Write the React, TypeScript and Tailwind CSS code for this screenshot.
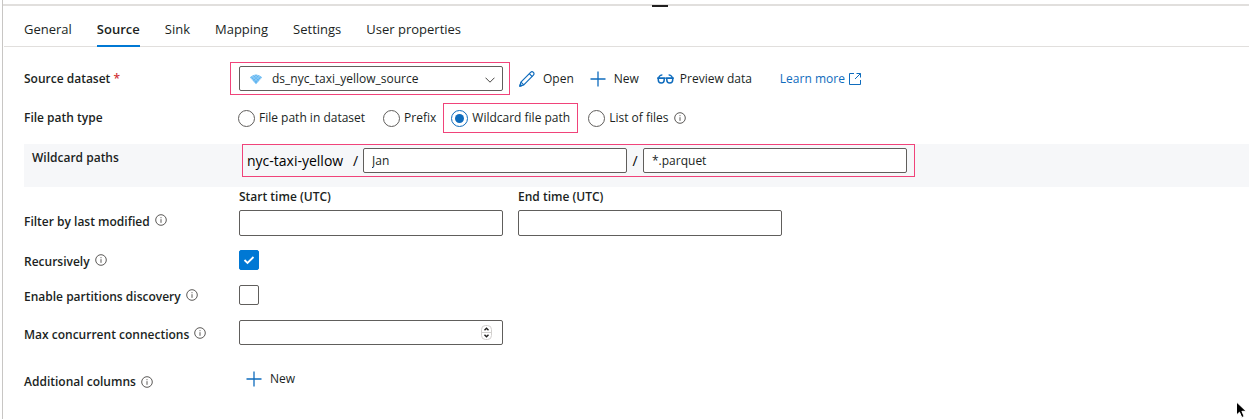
import type { ReactNode } from "react";

const tabs = ["General", "Source", "Sink", "Mapping", "Settings", "User properties"];

const fieldClass =
  "w-[264px] rounded-[2px] border border-[#605e5c] bg-white px-2 text-xs text-[#201f1e] outline-none";

function InfoIcon({ className = "" }: { className?: string }) {
  return (
    <svg viewBox="0 0 12 12" className={`size-3 shrink-0 ${className}`} fill="none" stroke="#484644" aria-hidden="true">
      <circle cx="6" cy="6" r="5.3" strokeWidth="0.9" />
      <path d="M6 5.2v3.6M6 3.2v1" strokeWidth="0.9" />
    </svg>
  );
}

function PencilIcon() {
  return (
    <svg viewBox="0 0 16 16" className="size-4" fill="none" stroke="#0f6cbd" strokeWidth="1.2" strokeLinejoin="round" aria-hidden="true">
      <path d="M.8 15.200l1.100-4.100L11.600 1.400c.8-.8 2-.8 2.800 0s.8 2 0 2.800L4.800 13.900z" />
      <path d="M10.300 2.700l2.900 2.900M1.900 11.100l2.900 2.800" />
      <path d="M.8 15.200l.5-1.900 1.400 1.400z" fill="#0f6cbd" />
    </svg>
  );
}

function PlusIcon() {
  return (
    <svg viewBox="0 0 16 16" className="size-4" stroke="#0f6cbd" strokeWidth="1.3" aria-hidden="true">
      <path d="M8 .5v15M.5 8h15" />
    </svg>
  );
}

function GlassesIcon() {
  return (
    <svg viewBox="0 0 17 12" className="h-3 w-[17px]" fill="none" stroke="#0f6cbd" strokeWidth="1.5" aria-hidden="true">
      <path d="M1.300 5.200h5.900v1.900a2.900 2.900 0 0 1-5.900 0zM9.800 5.200h5.900v1.900a2.900 2.900 0 0 1-5.900 0z" />
      <path d="M0 5.200h17M1.500 5C2 3.300 3.200 1.900 5.400 1.800M15.500 5c-.5-1.700-1.700-3.100-3.900-3.200" strokeWidth="1.200" />
    </svg>
  );
}

function ExternalIcon() {
  return (
    <svg viewBox="0 0 12 12" className="size-3" fill="none" stroke="#0f6cbd" strokeWidth="1" aria-hidden="true">
      <path d="M5 .5H.5v11h11V7M7.500.5h4v4M11.500.5L6 6" />
    </svg>
  );
}

function DatasetIcon() {
  return (
    <svg viewBox="0 0 14 12" className="h-3 w-3.5" aria-hidden="true">
      <path d="M1 4.200Q7-1 13 4.200L7 11.200z" fill="#5fb4f0" />
      <path
        d="M3 3l6.300 5.700M5 1.900l5.900 5M7.600 1.600l4.600 4M1.800 5l4.600 5.300M11 3L4.700 8.700M9 1.900l-5.900 5M6.400 1.600l-4.600 4M12.200 5l-4.600 5.300"
        stroke="#b5defa"
        strokeWidth="0.5"
      />
    </svg>
  );
}

function Label({
  children,
  htmlFor,
  info,
  className = "",
}: {
  children: ReactNode;
  htmlFor?: string;
  info?: "raised" | "inline";
  className?: string;
}) {
  return (
    <div className={`flex w-[206px] shrink-0 items-center gap-[5px] font-semibold ${className}`}>
      <label htmlFor={htmlFor}>{children}</label>
      {info && <InfoIcon className={info === "raised" ? "mb-1" : ""} />}
    </div>
  );
}

function Radio({ label, checked = false }: { label: string; checked?: boolean }) {
  return (
    <label className="flex items-center gap-1 whitespace-nowrap">
      <input
        type="radio"
        name="filePathType"
        defaultChecked={checked}
        className="grid size-[17px] shrink-0 appearance-none place-items-center rounded-full border border-[#605e5c] bg-white checked:border-[#0f6cbd] checked:before:size-[9px] checked:before:rounded-full checked:before:bg-[#0f6cbd] checked:before:content-['']"
      />
      {label}
    </label>
  );
}

function CheckBox({ id, checked = false }: { id: string; checked?: boolean }) {
  return (
    <div className="relative ml-[9px] size-5">
      <input
        id={id}
        type="checkbox"
        defaultChecked={checked}
        className="peer block size-5 appearance-none rounded-[2px] border border-[#605e5c] bg-white checked:border-[#0078d4] checked:bg-[#0078d4]"
      />
      <svg
        viewBox="0 0 20 20"
        className="pointer-events-none absolute inset-0 hidden size-5 peer-checked:block"
        fill="none"
        stroke="#fff"
        strokeWidth="1.8"
        aria-hidden="true"
      >
        <path d="M5.500 10l3 3 6-6" />
      </svg>
    </div>
  );
}

export default function App() {
  return (
    <div className="relative ml-0.5 min-h-screen border-l border-[#c8c6c4] bg-white font-['Open_Sans',sans-serif] text-xs text-[#201f1e]">
      <div className="flex h-[7px] items-end justify-center pt-1">
        <div className="flex h-[3px] w-full justify-center border-t-2 border-[#e1dfdd]">
          <span className="-mt-px ml-[68px] h-0.5 w-4 bg-[#201f1e]" />
        </div>
      </div>

      <nav className="ml-px flex h-10 gap-[25px] border-b border-[#e1dfdd] pl-5 text-[13px]">
        {tabs.map((tab) => (
          <button
            key={tab}
            type="button"
            className={
              tab === "Source"
                ? "-mb-px border-b-2 border-[#0078d4] pt-2 font-semibold"
                : "-mb-px border-b-2 border-transparent pt-2"
            }
          >
            {tab}
          </button>
        ))}
      </nav>

      <form className="flex flex-col pt-[15px] pl-[21px]">
        <div className="flex items-center">
          <Label htmlFor="dataset">
            Source dataset <span className="text-[#d13438]">*</span>
          </Label>
          <div className="border border-[#f0437a] py-[3px] pr-1.5 pl-2">
            <div className="relative">
              <select
                id="dataset"
                className="block h-[25px] w-[264px] appearance-none rounded-[2px] border border-[#605e5c] bg-white pl-8 text-xs outline-none"
              >
                <option>ds_nyc_taxi_yellow_source</option>
              </select>
              <span className="pointer-events-none absolute inset-y-0 left-2.5 flex items-center">
                <DatasetIcon />
              </span>
              <svg viewBox="0 0 10 6" className="pointer-events-none absolute top-[11px] right-2 h-1.5 w-2.5" fill="none" stroke="#484644" aria-hidden="true">
                <path d="M.5.7L5 5.200 9.500.7" />
              </svg>
            </div>
          </div>
          <div className="flex items-center gap-4 pl-[9px]">
            <button type="button" className="flex items-center gap-2">
              <PencilIcon />
              Open
            </button>
            <button type="button" className="flex items-center gap-2">
              <PlusIcon />
              New
            </button>
            <button type="button" className="flex items-center gap-1.5 pl-0.5">
              <GlassesIcon />
              Preview data
            </button>
            <a href="#learn-more" className="ml-3 flex items-center gap-1 text-[#0f6cbd]">
              Learn more
              <ExternalIcon />
            </a>
          </div>
        </div>

        <div className="mt-2 flex items-center">
          <Label>File path type</Label>
          <div className="flex items-center pl-2">
            <Radio label="File path in dataset" />
            <div className="pl-[18px]">
              <Radio label="Prefix" />
            </div>
            <div className="ml-[7px] flex h-[30px] items-center border border-[#f0437a] px-[7px]">
              <Radio label="Wildcard file path" checked />
            </div>
            <div className="flex items-center gap-[5px] pl-2.5">
              <Radio label="List of files" />
              <InfoIcon />
            </div>
          </div>
        </div>

        <div className="mt-[11px] flex h-[43px] items-start bg-[#f6f7f9]">
          <Label htmlFor="folder" className="h-7 pl-2">
            Wildcard paths
          </Label>
          <div className="ml-3 flex h-[33px] items-center border border-[#f0437a] pr-[7px] pl-1 text-sm text-black">
            <span className="w-[106px] whitespace-nowrap">nyc-taxi-yellow</span>
            <span className="w-2.5">/</span>
            <input id="folder" type="text" defaultValue="Jan" className={`${fieldClass} h-[25px]`} />
            <span className="w-4 text-center">/</span>
            <input type="text" aria-label="Wildcard file name" defaultValue="*.parquet" className={`${fieldClass} h-[25px]`} />
          </div>
        </div>

        <div className="flex items-end">
          <Label info="raised" className="h-7">
            Filter by last modified
          </Label>
          <div className="flex gap-[15px] pl-[9px]">
            <label className="flex flex-col gap-[3px] font-semibold leading-5">
              Start time (UTC)
              <input type="text" className={`${fieldClass} h-[26px]`} />
            </label>
            <label className="flex flex-col gap-[3px] font-semibold leading-5">
              End time (UTC)
              <input type="text" className={`${fieldClass} h-[26px]`} />
            </label>
          </div>
        </div>

        <div className="mt-3.5 flex h-5 items-center">
          <Label htmlFor="recursive" info="raised" className="pt-1">
            Recursively
          </Label>
          <CheckBox id="recursive" checked />
        </div>

        <div className="mt-[15px] flex h-5 items-center">
          <Label htmlFor="partitions" info="raised" className="pt-1">
            Enable partitions discovery
          </Label>
          <CheckBox id="partitions" />
        </div>

        <div className="mt-[15px] flex h-[25px] items-center">
          <Label htmlFor="connections" info="raised" className="pt-1">
            Max concurrent connections
          </Label>
          <div className="relative ml-[9px]">
            <input
              id="connections"
              type="number"
              className={`${fieldClass} block h-[25px] [appearance:textfield]`}
            />
            <svg viewBox="0 0 11 15" className="pointer-events-none absolute top-[5px] right-[11px] h-[15px] w-[11px]" fill="none" aria-hidden="true">
              <rect x=".5" y=".5" width="10" height="14" rx="4" fill="#fff" stroke="#d2d0ce" />
              <path d="M.5 7.500h10" stroke="#d2d0ce" />
              <path d="M3.500 5.200l2-2 2 2M3.500 9.800l2 2 2-2" stroke="#201f1e" strokeWidth="1.400" />
            </svg>
          </div>
        </div>

        <div className="mt-[23px] flex h-[22px] items-center">
          <Label info="inline" className="pt-1.5">
            Additional columns
          </Label>
          <button type="button" className="ml-4 flex items-center gap-2">
            <PlusIcon />
            New
          </button>
        </div>
      </form>

      <svg viewBox="0 0 12 18" className="pointer-events-none absolute right-0.5 bottom-0 h-[18px] w-3" aria-hidden="true">
        <path d="M1.500 1v13l3-2.800 2.300 5.300 2.400-1-2.300-5.200h4.300z" fill="#000" stroke="#fff" strokeWidth="1" />
      </svg>
    </div>
  );
}
